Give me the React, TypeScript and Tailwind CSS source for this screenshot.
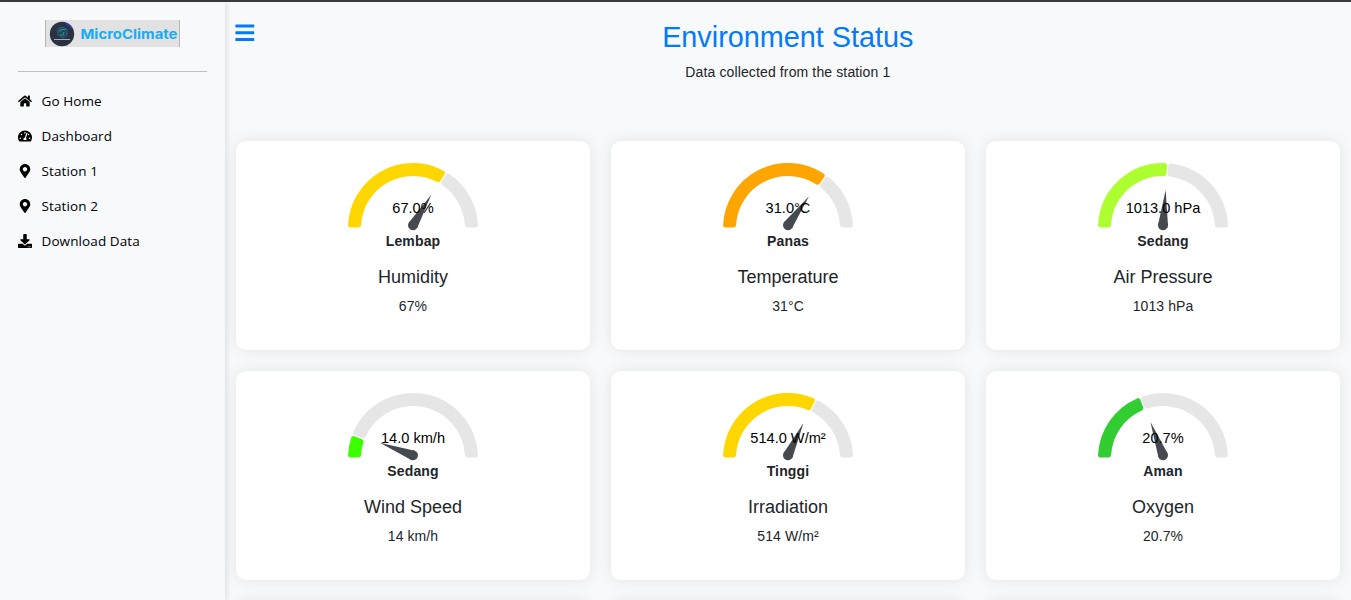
import React from "react";
import { FaBars, FaDownload, FaHome, FaMapMarkerAlt, FaTachometerAlt } from "react-icons/fa";

const CX = 65;
const CY = 65;
const OUTER = 65;
const INNER = 52;
const CORNER = 2.5;
const PAD = 0.6;

function point(radius: number, angle: number) {
  return `${(CX - radius * Math.cos(angle)).toFixed(3)} ${(CY - radius * Math.sin(angle)).toFixed(3)}`;
}

function segment(from: number, to: number) {
  const outer = OUTER - CORNER;
  const inner = INNER + CORNER;
  const inset = PAD + CORNER;
  const a = from * Math.PI;
  const b = to * Math.PI;
  const dOuter = Math.asin(inset / outer);
  const dInner = Math.asin(inset / inner);
  return [
    `M${point(outer, a + dOuter)}`,
    `A${outer} ${outer} 0 0 1 ${point(outer, b - dOuter)}`,
    `L${point(inner, b - dInner)}`,
    `A${inner} ${inner} 0 0 0 ${point(inner, a + dInner)}`,
    "Z",
  ].join(" ");
}

interface GaugeProps {
  level: number;
  color: string;
  reading: string;
}

function Gauge({ level, color, reading }: GaugeProps) {
  return (
    <svg width="130" height="68" viewBox="0 0 130 68" className="block overflow-visible">
      <path d={segment(0, level)} fill={color} stroke={color} strokeWidth={CORNER * 2} strokeLinejoin="round" />
      <path d={segment(level, 1)} fill="#e6e6e6" stroke="#e6e6e6" strokeWidth={CORNER * 2} strokeLinejoin="round" />
      <g transform={`translate(65 62.3) rotate(${level * 180 - 90})`} fill="#464a4f">
        <path d="M-5 0L0 -35.5L5 0Z" />
        <circle r="5" />
      </g>
      <text x="65" y="50" textAnchor="middle" fill="#000" className="font-['Liberation_Sans',sans-serif] text-[14.6px]">
        {reading}
      </text>
    </svg>
  );
}

interface Metric extends GaugeProps {
  status: string;
  name: string;
  value: string;
}

const metrics: Metric[] = [
  { level: 0.672, color: "#ffd700", reading: "67.0%", status: "Lembap", name: "Humidity", value: "67%" },
  { level: 0.7, color: "#ffa500", reading: "31.0°C", status: "Panas", name: "Temperature", value: "31°C" },
  { level: 0.524, color: "#adff2f", reading: "1013.0 hPa", status: "Sedang", name: "Air Pressure", value: "1013 hPa" },
  { level: 0.116, color: "#3cff00", reading: "14.0 km/h", status: "Sedang", name: "Wind Speed", value: "14 km/h" },
  { level: 0.643, color: "#ffd700", reading: "514.0 W/m²", status: "Tinggi", name: "Irradiation", value: "514 W/m²" },
  { level: 0.385, color: "#32cd32", reading: "20.7%", status: "Aman", name: "Oxygen", value: "20.7%" },
];

function MetricCard({ status, name, value, ...gauge }: Metric) {
  return (
    <article className="flex h-[209px] flex-col items-center rounded-[10px] bg-white pt-[22px] shadow-[0_0_15px_rgba(0,0,0,0.085)]">
      <Gauge {...gauge} />
      <p className="text-sm leading-[21px] font-bold tracking-[0.15px]">{status}</p>
      <h2 className="mt-3.5 text-lg leading-[22px]">{name}</h2>
      <p className="mt-2 text-sm leading-[21px] tracking-[0.1px]">{value}</p>
    </article>
  );
}

const links = [
  { label: "Go Home", Icon: FaHome },
  { label: "Dashboard", Icon: FaTachometerAlt },
  { label: "Station 1", Icon: FaMapMarkerAlt },
  { label: "Station 2", Icon: FaMapMarkerAlt },
  { label: "Download Data", Icon: FaDownload },
];

function Logo() {
  return (
    <div className="ml-[45px] flex h-[27px] w-[135px] items-center border-x border-[#b5b5b5] bg-[#e2e2e2] pl-[3px]">
      <svg width="26" height="26" viewBox="0 0 26 26" className="shrink-0">
        <circle cx="13" cy="13" r="12.2" fill="#2a3140" />
        <path d="M15.500 1.500A12 12 0 0 1 23 7.500L20.500 5.500Z" fill="#3438b4" stroke="#3438b4" />
        <path d="M9 8l4-2 5 2v6l-4 3-5-3z" fill="#214659" stroke="#27628a" />
        <path d="M16.500 8.500h-4l-2 2M15 11l-1 3h-3" fill="none" stroke="#27a795" strokeWidth="1.2" opacity="0.8" />
        <path d="M5 18.500h16" stroke="#b6bac2" strokeWidth="0.9" />
      </svg>
      <svg width="98" height="20" viewBox="0 0 98 20" className="ml-[6px] shrink-0 overflow-visible">
        <text x="-0.5" y="14.500" textLength="97" lengthAdjust="spacingAndGlyphs" fill="#17acf7" className="font-['Inter',sans-serif] text-[13.500px] font-bold">
          MicroClimate
        </text>
      </svg>
    </div>
  );
}

export default function App() {
  return (
    <div className="flex h-[600px] flex-col overflow-hidden bg-[#f8f9fb] font-['Liberation_Sans',sans-serif] text-[#212529]">
      <div className="h-[2px] shrink-0 bg-[#3a3b3d]" />
      <div className="flex min-h-0 flex-1">
        <aside className="w-[225px] shrink-0 bg-[#f8f9fb] pt-[18px] shadow-[2px_0_5px_rgba(0,0,0,0.1)]">
          <Logo />
          <hr className="mx-[18px] mt-6 border-t border-[#bfc0c2]" />
          <nav className="mt-[11px] font-['Open_Sans',sans-serif] text-sm text-black">
            {links.map(({ label, Icon }) => (
              <a key={label} className="flex h-[35px] items-center pl-[18px]">
                <Icon size={14} className="mr-[9.500px]" />
                <span className="pt-[2px] text-[13.500px] tracking-[0.1px]">{label}</span>
              </a>
            ))}
          </nav>
        </aside>
        <main className="min-w-0 flex-1 pr-[11px] pl-[11px]">
          <header className="flex h-[139px] items-start">
            <button aria-label="Toggle sidebar" className="-ml-[2px] mt-5 text-[#007bff]">
              <FaBars size={21.6} />
            </button>
            <div className="mr-5 flex-1 text-center">
              <h1 className="mt-[18px] text-[28.800px] leading-[34px] text-[#007bff]">Environment Status</h1>
              <p className="mt-2 text-sm leading-[21px] tracking-[0.13px]">Data collected from the station 1</p>
            </div>
          </header>
          <section className="grid grid-cols-3 gap-[21px]">
            {metrics.map((metric) => (
              <MetricCard key={metric.name} {...metric} />
            ))}
            {[0, 1, 2].map((slot) => (
              <article key={slot} className="h-[209px] rounded-[10px] bg-white shadow-[0_0_15px_rgba(0,0,0,0.085)]" />
            ))}
          </section>
        </main>
      </div>
    </div>
  );
}
